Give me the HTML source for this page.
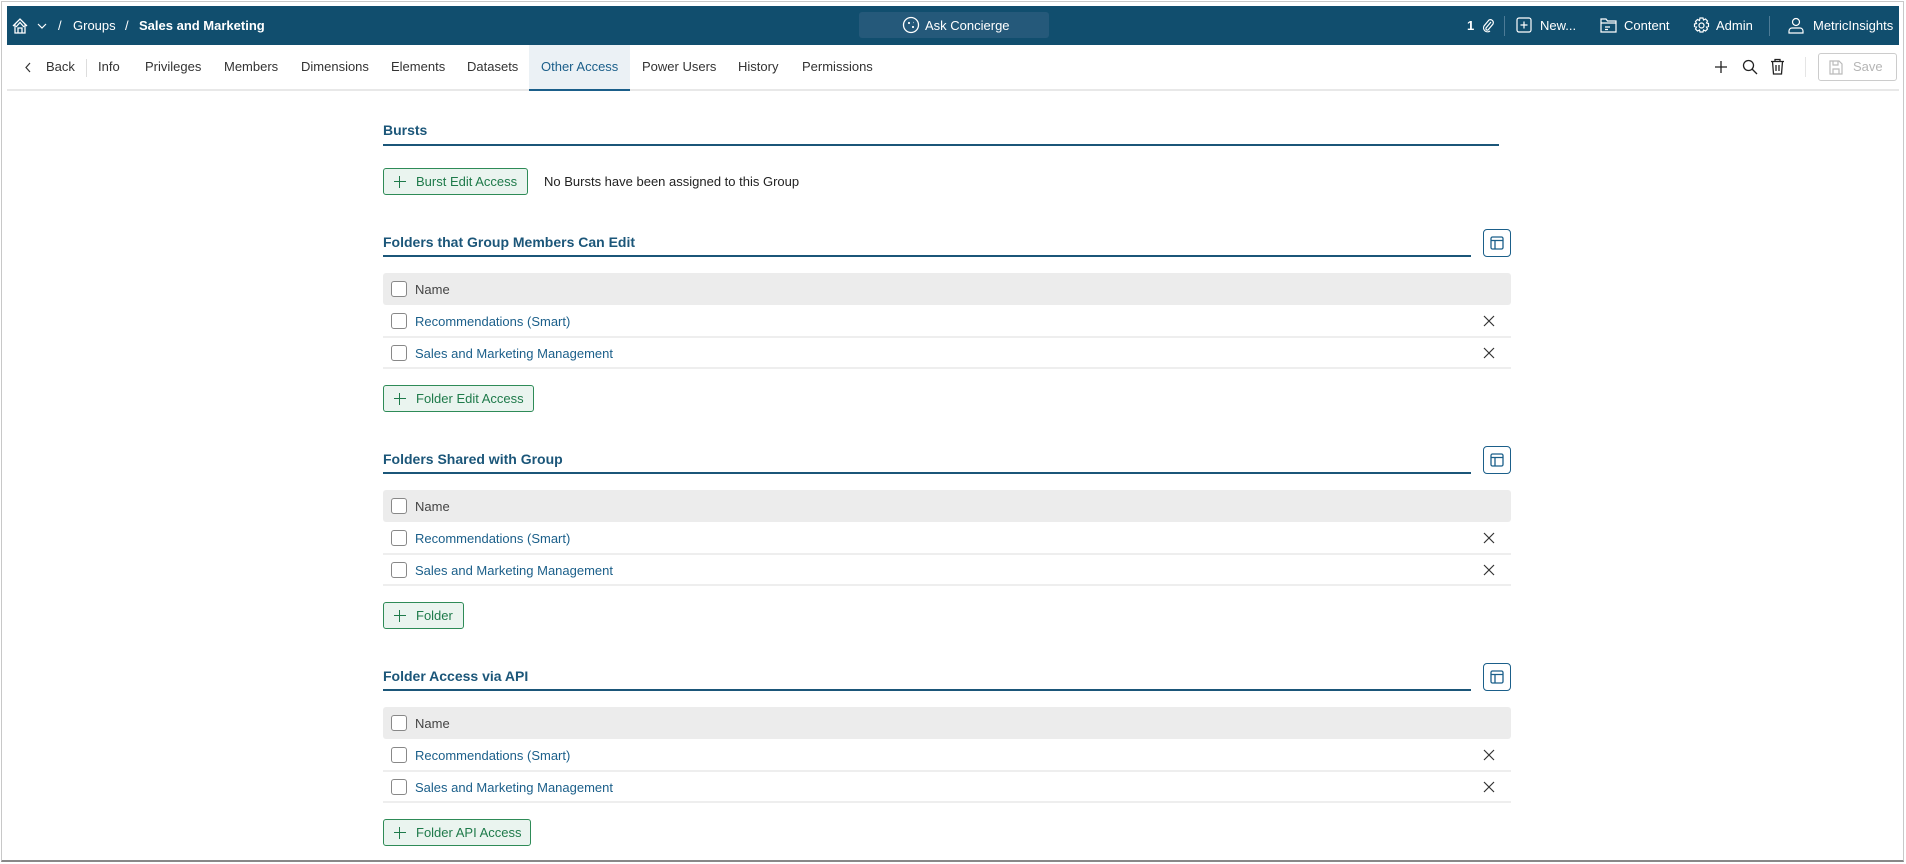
<!DOCTYPE html>
<html><head><meta charset="utf-8"><style>
*{box-sizing:border-box;margin:0;padding:0}
body{width:1906px;height:864px;background:#fff;font-family:"Liberation Sans",sans-serif;font-size:13px;color:#222;position:relative;overflow:hidden}
.a{position:absolute}
.frame{left:1px;top:1px;width:1903px;height:861px;border:1px solid #c8c8c8;border-bottom:2px solid #888}
.top{left:7px;top:6px;width:1892px;height:39px;background:#114e6e;color:#fff}
.top .t{position:absolute;top:0;line-height:39px;font-size:13px}
.tabs{left:7px;top:45px;width:1892px;height:46px;border-bottom:2px solid #e8e8e8}
.tab{position:absolute;top:0;line-height:44px;font-size:13px;color:#333}
.title{font-size:14px;font-weight:bold;color:#1b5679}
.line{height:2px;background:#1b5679}
.btn{border:1px solid #2e8b57;background:#eaf4ef;color:#1e7a4a;border-radius:3px;height:27px;line-height:25px;font-size:13px;padding-left:32px}
.btn:before{content:"";position:absolute;left:10px;top:7px;width:12px;height:12px;background:linear-gradient(#1e7a4a,#1e7a4a) center/12px 1.4px no-repeat,linear-gradient(#1e7a4a,#1e7a4a) center/1.4px 12px no-repeat}
.hdr{background:#ececec;border-radius:3px;height:32px}
.cb{position:absolute;width:16px;height:16px;border:1.3px solid #888;border-radius:3px;background:#fff}
.rowtxt{color:#1b5f8a}
.bd{height:2px;background:#eee}
.ib{width:28px;height:28px;border:1.5px solid #1b5f8a;border-radius:4px}
.x{position:absolute;width:12px;height:12px}
</style></head><body>
<div class="a frame"></div>
<div class="a top">
 <svg class="a" style="left:4px;top:11px" width="18" height="18" viewBox="0 0 18 18" fill="none" stroke="#fff" stroke-width="1.3"><path d="M2 9 L9 2 L16 9 M4 7.5 V16 H14 V7.5 M7 16 V11 H11 V16 M5 10 L9 5.5 L13 10"/></svg>
 <svg class="a" style="left:30px;top:16px" width="10" height="8" viewBox="0 0 10 8" fill="none" stroke="#fff" stroke-width="1.2"><path d="M1 2 L5 6 L9 2"/></svg>
 <span class="t" style="left:51px">/</span>
 <span class="t" style="left:66px">Groups</span>
 <span class="t" style="left:118px">/</span>
 <span class="t" style="left:132px;font-weight:bold">Sales and Marketing</span>
 <div class="a" style="left:852px;top:6px;width:190px;height:26px;background:#25597a;border-radius:3px"></div>
 <svg class="a" style="left:895px;top:10px" width="18" height="18" viewBox="0 0 18 18" fill="none" stroke="#fff" stroke-width="1.3"><circle cx="9" cy="9" r="7.5"/><path d="M6 7h2M7 6v2M10 11h2M11 10v2M11 6.5h.5"/></svg>
 <span class="t" style="left:918px">Ask Concierge</span>
 <span class="t" style="left:1460px;font-weight:bold">1</span>
 <svg class="a" style="left:1474px;top:12px" width="14" height="16" viewBox="0 0 14 16" fill="none" stroke="#fff" stroke-width="1.2"><path d="M10 4 L5 10 a1.5 1.5 0 0 0 2 2 L12 6 a3 3 0 0 0 -4 -4 L3 8 a4 4 0 0 0 6 5"/></svg>
 <div class="a" style="left:1497px;top:10px;width:1px;height:20px;background:#4d7b96"></div>
 <svg class="a" style="left:1509px;top:11px" width="16" height="16" viewBox="0 0 16 16" fill="none" stroke="#fff" stroke-width="1.2"><rect x="1" y="1" width="14" height="14" rx="2"/><path d="M8 4.5v7M4.5 8h7"/></svg>
 <span class="t" style="left:1533px">New...</span>
 <svg class="a" style="left:1593px;top:11px" width="17" height="16" viewBox="0 0 17 16" fill="none" stroke="#fff" stroke-width="1.2"><path d="M1 2h5l1.5 2H16v11H1z M1 6h15M5 10h5M5 12.5h3"/></svg>
 <span class="t" style="left:1617px">Content</span>
 <svg class="a" style="left:1686px;top:11px" width="17" height="17" viewBox="0 0 17 17" fill="none" stroke="#fff" stroke-width="1.2"><circle cx="8.5" cy="8.5" r="2.5"/><path d="M7 1h3l.5 2 2-1 2 2-1 2 2 .5v3l-2 .5 1 2-2 2-2-1-.5 2H7l-.5-2-2 1-2-2 1-2-2-.5V7l2-.5-1-2 2-2 2 1z"/></svg>
 <span class="t" style="left:1709px">Admin</span>
 <div class="a" style="left:1762px;top:10px;width:1px;height:20px;background:#4d7b96"></div>
 <svg class="a" style="left:1781px;top:11px" width="16" height="17" viewBox="0 0 16 17" fill="none" stroke="#fff" stroke-width="1.2"><circle cx="8" cy="5" r="3.5"/><path d="M1 16v-2a3 3 0 0 1 3-3h8a3 3 0 0 1 3 3v2z"/></svg>
 <span class="t" style="left:1806px">MetricInsights</span>
</div>
<div class="a tabs">
 <svg class="a" style="left:17px;top:17px" width="8" height="11" viewBox="0 0 8 11" fill="none" stroke="#333" stroke-width="1.2"><path d="M6 1 L2 5.5 L6 10"/></svg>
 <span class="tab" style="left:39px">Back</span>
 <div class="a" style="left:79px;top:14px;width:1px;height:18px;background:#ddd"></div>
 <span class="tab" style="left:91px">Info</span>
 <span class="tab" style="left:138px">Privileges</span>
 <span class="tab" style="left:217px">Members</span>
 <span class="tab" style="left:294px">Dimensions</span>
 <span class="tab" style="left:384px">Elements</span>
 <span class="tab" style="left:460px">Datasets</span>
 <div class="a" style="left:522px;top:0;width:101px;height:46px;background:#ebf1f5;border-bottom:2px solid #1b5f8a"></div>
 <span class="tab" style="left:534px;color:#1b5f8a">Other Access</span>
 <span class="tab" style="left:635px">Power Users</span>
 <span class="tab" style="left:731px">History</span>
 <span class="tab" style="left:795px">Permissions</span>
 <svg class="a" style="left:1707px;top:15px" width="14" height="14" viewBox="0 0 14 14" stroke="#222" stroke-width="1.3"><path d="M7 1v12M1 7h12"/></svg>
 <svg class="a" style="left:1735px;top:14px" width="16" height="16" viewBox="0 0 16 16" fill="none" stroke="#222" stroke-width="1.3"><circle cx="6.5" cy="6.5" r="5"/><path d="M10 10l5 5"/></svg>
 <svg class="a" style="left:1763px;top:13px" width="15" height="17" viewBox="0 0 15 17" fill="none" stroke="#222" stroke-width="1.3"><path d="M1 3.5h13M5 3.5V1.5h5v2M2.5 3.5l1 12.5h8l1-12.5M6 7v6M9 7v6"/></svg>
 <div class="a" style="left:1798px;top:12px;width:1px;height:20px;background:#e5e5e5"></div>
 <div class="a" style="left:1811px;top:8px;width:79px;height:28px;border:1px solid #ccc;border-radius:3px;color:#b5b5b5;line-height:26px;padding-left:34px">Save</div>
 <svg class="a" style="left:1822px;top:15px" width="14" height="15" viewBox="0 0 14 15" fill="none" stroke="#bbb" stroke-width="1.2"><path d="M1 1h9l3 3v10H1z M4 1v4h5V1M4 14V9h6v5"/></svg>
</div>

<div class="a title" style="left:383px;top:122px">Bursts</div>
<div class="a line" style="left:383px;top:144px;width:1116px"></div>
<div class="a btn" style="left:383px;top:168px;width:145px">Burst Edit Access</div>
<div class="a" style="left:544px;top:174px">No Bursts have been assigned to this Group</div>

<div class="a" style="left:383px;top:234px;width:1130px;height:180px">
 <div class="a title" style="left:0;top:0">Folders that Group Members Can Edit</div>
 <div class="a line" style="left:0;top:21px;width:1088px"></div>
 <div class="a ib" style="left:1100px;top:-5px"></div>
 <svg class="a" style="left:1107px;top:2px" width="14" height="14" viewBox="0 0 14 14" fill="none" stroke="#1b5f8a" stroke-width="1.3"><rect x="1" y="1" width="12" height="12" rx="1.5"/><path d="M1 4.5h12M5 4.5V13"/></svg>
 <div class="a hdr" style="left:0;top:39px;width:1128px"></div>
 <div class="cb" style="left:8px;top:47px"></div><div class="a" style="left:32px;top:48px;color:#444">Name</div>
 <div class="cb" style="left:8px;top:79px"></div><div class="a rowtxt" style="left:32px;top:80px">Recommendations (Smart)</div>
 <svg class="x" style="left:1100px;top:81px" viewBox="0 0 12 12" stroke="#333" stroke-width="1.2"><path d="M1 1L11 11M11 1L1 11"/></svg>
 <div class="a bd" style="left:0;top:102px;width:1128px"></div>
 <div class="cb" style="left:8px;top:111px"></div><div class="a rowtxt" style="left:32px;top:112px">Sales and Marketing Management</div>
 <svg class="x" style="left:1100px;top:113px" viewBox="0 0 12 12" stroke="#333" stroke-width="1.2"><path d="M1 1L11 11M11 1L1 11"/></svg>
 <div class="a bd" style="left:0;top:133px;width:1128px"></div>
 <div class="a btn" style="left:0;top:151px;width:151px">Folder Edit Access</div>
</div>

<div class="a" style="left:383px;top:451px;width:1130px;height:180px">
 <div class="a title" style="left:0;top:0">Folders Shared with Group</div>
 <div class="a line" style="left:0;top:21px;width:1088px"></div>
 <div class="a ib" style="left:1100px;top:-5px"></div>
 <svg class="a" style="left:1107px;top:2px" width="14" height="14" viewBox="0 0 14 14" fill="none" stroke="#1b5f8a" stroke-width="1.3"><rect x="1" y="1" width="12" height="12" rx="1.5"/><path d="M1 4.5h12M5 4.5V13"/></svg>
 <div class="a hdr" style="left:0;top:39px;width:1128px"></div>
 <div class="cb" style="left:8px;top:47px"></div><div class="a" style="left:32px;top:48px;color:#444">Name</div>
 <div class="cb" style="left:8px;top:79px"></div><div class="a rowtxt" style="left:32px;top:80px">Recommendations (Smart)</div>
 <svg class="x" style="left:1100px;top:81px" viewBox="0 0 12 12" stroke="#333" stroke-width="1.2"><path d="M1 1L11 11M11 1L1 11"/></svg>
 <div class="a bd" style="left:0;top:102px;width:1128px"></div>
 <div class="cb" style="left:8px;top:111px"></div><div class="a rowtxt" style="left:32px;top:112px">Sales and Marketing Management</div>
 <svg class="x" style="left:1100px;top:113px" viewBox="0 0 12 12" stroke="#333" stroke-width="1.2"><path d="M1 1L11 11M11 1L1 11"/></svg>
 <div class="a bd" style="left:0;top:133px;width:1128px"></div>
 <div class="a btn" style="left:0;top:151px;width:81px">Folder</div>
</div>

<div class="a" style="left:383px;top:668px;width:1130px;height:180px">
 <div class="a title" style="left:0;top:0">Folder Access via API</div>
 <div class="a line" style="left:0;top:21px;width:1088px"></div>
 <div class="a ib" style="left:1100px;top:-5px"></div>
 <svg class="a" style="left:1107px;top:2px" width="14" height="14" viewBox="0 0 14 14" fill="none" stroke="#1b5f8a" stroke-width="1.3"><rect x="1" y="1" width="12" height="12" rx="1.5"/><path d="M1 4.5h12M5 4.5V13"/></svg>
 <div class="a hdr" style="left:0;top:39px;width:1128px"></div>
 <div class="cb" style="left:8px;top:47px"></div><div class="a" style="left:32px;top:48px;color:#444">Name</div>
 <div class="cb" style="left:8px;top:79px"></div><div class="a rowtxt" style="left:32px;top:80px">Recommendations (Smart)</div>
 <svg class="x" style="left:1100px;top:81px" viewBox="0 0 12 12" stroke="#333" stroke-width="1.2"><path d="M1 1L11 11M11 1L1 11"/></svg>
 <div class="a bd" style="left:0;top:102px;width:1128px"></div>
 <div class="cb" style="left:8px;top:111px"></div><div class="a rowtxt" style="left:32px;top:112px">Sales and Marketing Management</div>
 <svg class="x" style="left:1100px;top:113px" viewBox="0 0 12 12" stroke="#333" stroke-width="1.2"><path d="M1 1L11 11M11 1L1 11"/></svg>
 <div class="a bd" style="left:0;top:133px;width:1128px"></div>
 <div class="a btn" style="left:0;top:151px;width:148px">Folder API Access</div>
</div>
</body></html>
